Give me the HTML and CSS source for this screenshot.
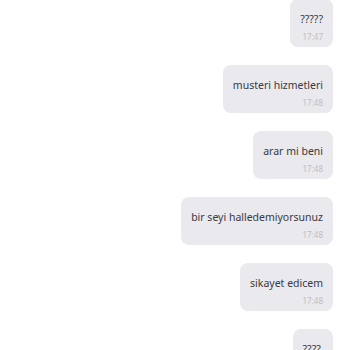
FILE: index.html
```html
<!DOCTYPE html>
<html lang="en">
<head>
    <meta charset="UTF-8">
    <title>Chat</title>
    <link rel="stylesheet" href="styles.css">
</head>
<body>
    <div class="chat">
        <div class="bubble first">
            <div class="msg-text">?????</div>
            <div class="msg-time">17:47</div>
        </div>
        <div class="bubble">
            <div class="msg-text">musteri hizmetleri</div>
            <div class="msg-time">17:48</div>
        </div>
        <div class="bubble">
            <div class="msg-text">arar mi beni</div>
            <div class="msg-time">17:48</div>
        </div>
        <div class="bubble">
            <div class="msg-text">bir seyi halledemiyorsunuz</div>
            <div class="msg-time">17:48</div>
        </div>
        <div class="bubble">
            <div class="msg-text">sikayet edicem</div>
            <div class="msg-time">17:48</div>
        </div>
        <div class="bubble">
            <div class="msg-text">????</div>
            <div class="msg-time">17:48</div>
        </div>
    </div>
</body>
</html>
```
FILE: styles.css
```css
body {
    margin: 0;
    background: #ffffff;
    font-family: 'Noto Sans', 'Open Sans', sans-serif;
    overflow: hidden;
    height: 350px;
}

.chat {
    display: flex;
    flex-direction: column;
    align-items: flex-end;
    gap: 18px;
    padding-right: 17px;
    height: 350px;
    overflow: hidden;
}

.bubble {
    flex-shrink: 0;
    background: #e9e9ee;
    border-radius: 8px;
    padding: 12px 10px 5px 10px;
    height: 48px;
    box-sizing: border-box;
}

.first {
    margin-top: -1px;
}

.msg-text {
    font-size: 10.5px;
    line-height: 16px;
    color: #3a3a40;
}

.msg-time {
    font-size: 8px;
    line-height: 10px;
    margin-top: 5px;
    text-align: right;
    color: #bdbdc3;
}
```
